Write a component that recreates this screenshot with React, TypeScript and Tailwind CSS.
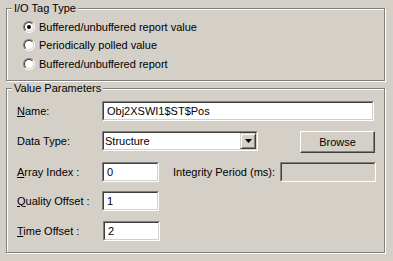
import type { ReactNode } from "react";

const font = { fontFamily: '"Liberation Sans", Arial, sans-serif' };

function GroupBox({ title, height, children }: { title: string; height: string; children: ReactNode }) {
  return (
    <div
      className={`relative w-[379px] ${height} border border-[#808080] shadow-[inset_1px_1px_0_#fff,1px_1px_0_#fff]`}
    >
      <span className="absolute left-[5px] top-[-7px] bg-[#d4d0c8] px-[2px] leading-[13px]">{title}</span>
      {children}
    </div>
  );
}

function Radio({ checked, label }: { checked?: boolean; label: string }) {
  return (
    <div className="flex h-[18px] items-center">
      <div className="h-[12px] w-[12px] rounded-full border border-t-[#808080] border-l-[#808080] border-b-white border-r-white">
        <div className="flex h-full w-full items-center justify-center rounded-full border border-t-[#404040] border-l-[#404040] border-b-[#d4d0c8] border-r-[#d4d0c8] bg-white">
          {checked && <div className="h-[4px] w-[4px] rounded-full bg-black" />}
        </div>
      </div>
      <span className="ml-[4px] leading-[13px]">{label}</span>
    </div>
  );
}

function Sunken({ width, value, disabled, children }: { width: string; value?: string; disabled?: boolean; children?: ReactNode }) {
  return (
    <div className={`${width} h-[20px] border border-t-[#808080] border-l-[#808080] border-b-white border-r-white`}>
      <div
        className={`flex h-full items-center border border-t-[#404040] border-l-[#404040] border-b-[#d4d0c8] border-r-[#d4d0c8] ${
          disabled ? "bg-[#d4d0c8]" : "bg-white"
        }`}
      >
        {value !== undefined && <span className="pl-[3px] leading-[13px]">{value}</span>}
        {children}
      </div>
    </div>
  );
}

function Label({ children }: { children: ReactNode }) {
  return <span className="w-[85px] shrink-0 leading-[13px]">{children}</span>;
}

export default function App() {
  return (
    <div
      className="h-[261px] w-[393px] overflow-hidden bg-[#d4d0c8] pl-[6px] pt-[8px] text-[11px] text-black"
      style={font}
    >
      <GroupBox title="I/O Tag Type" height="h-[73px]">
        <div className="flex flex-col pl-[16px] pt-[9px]">
          <Radio checked label="Buffered/unbuffered report value" />
          <Radio label="Periodically polled value" />
          <div className="mt-[1px]">
            <Radio label="Buffered/unbuffered report" />
          </div>
        </div>
      </GroupBox>

      <div className="mt-[7px]">
        <GroupBox title="Value Parameters" height="h-[165px]">
          <div className="flex flex-col pl-[10px] pt-[12px]">
            <div className="flex items-center">
              <Label>
                <u>N</u>ame:
              </Label>
              <Sunken width="w-[272px]" value="Obj2XSWI1$ST$Pos" />
            </div>

            <div className="mt-[10px] flex items-start">
              <div className="flex h-[20px] items-center">
                <Label>Data Type:</Label>
              </div>
              <Sunken width="w-[156px]">
                <span className="flex-1 pl-[1px] leading-[13px]">Structure</span>
                <div className="flex h-full w-[16px] items-center justify-center border border-t-[#d4d0c8] border-l-[#d4d0c8] border-b-[#404040] border-r-[#404040] bg-[#d4d0c8] shadow-[inset_1px_1px_0_#fff,inset_-1px_-1px_0_#808080]">
                  <svg width="7" height="4" viewBox="0 0 7 4">
                    <path d="M0 0h7L3.5 4z" fill="#000" />
                  </svg>
                </div>
              </Sunken>
              <div className="ml-[42px] flex h-[22px] w-[75px] items-center justify-center border border-t-white border-l-white border-b-[#404040] border-r-[#404040] shadow-[inset_-1px_-1px_0_#808080]">
                <span className="leading-[13px]">Browse</span>
              </div>
            </div>

            <div className="mt-[9px] flex items-center">
              <Label>
                <u>A</u>rray Index :
              </Label>
              <Sunken width="w-[57px]" value="0" />
              <span className="ml-[14px] w-[107px] leading-[13px]">Integrity Period (ms):</span>
              <Sunken width="w-[96px]" disabled />
            </div>

            <div className="mt-[9px] flex items-center">
              <Label>
                <u>Q</u>uality Offset :
              </Label>
              <Sunken width="w-[57px]" value="1" />
            </div>

            <div className="mt-[10px] flex items-center">
              <Label>
                <u>T</u>ime Offset :
              </Label>
              <div className="ml-[1px]">
                <Sunken width="w-[57px]" value="2" />
              </div>
            </div>
          </div>
        </GroupBox>
      </div>
    </div>
  );
}
